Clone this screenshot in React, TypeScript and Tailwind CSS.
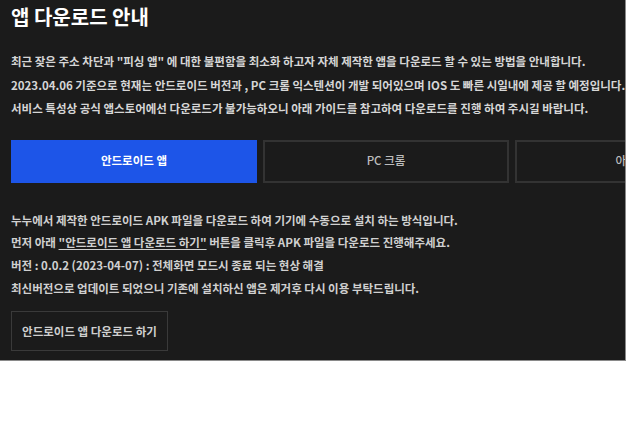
import React from 'react';

const FONT = { fontFamily: '"Noto Sans CJK KR", "Noto Sans", sans-serif' };

const tabs = ['안드로이드 앱', 'PC 크롬', '아이폰 앱'];

const App: React.FC = () => {
  return (
    <div className="w-[640px] h-[427px] bg-white" style={FONT}>
      <div className="w-[626px] h-[361px] bg-[#1b1b1b] border-r border-b border-[#8a8a8a] overflow-hidden pl-[11px]">
        <h1 className="h-[34px] pt-[2px] text-[20px] leading-[30px] font-semibold text-white">앱 다운로드 안내</h1>

        <div className="mt-[16px] text-[11.5px] leading-[23.5px] font-semibold text-[#d6d6d6] whitespace-nowrap">
          <p>최근 잦은 주소 차단과 "피싱 앱" 에 대한 불편함을 최소화 하고자 자체 제작한 앱을 다운로드 할 수 있는 방법을 안내합니다.</p>
          <p>2023.04.06 기준으로 현재는 안드로이드 버전과 , PC 크롬 익스텐션이 개발 되어있으며 IOS 도 빠른 시일내에 제공 할 예정입니다.</p>
          <p>서비스 특성상 공식 앱스토어에선 다운로드가 불가능하오니 아래 가이드를 참고하여 다운로드를 진행 하여 주시길 바랍니다.</p>
        </div>

        <div className="mt-[19px] flex gap-[6px]">
          {tabs.map((t, i) => (
            <div
              key={t}
              className={`shrink-0 w-[246px] h-[43px] flex items-center justify-center text-[11.5px] ${
                i === 0
                  ? 'bg-[#1d55e8] text-white font-semibold'
                  : 'border-2 border-[#333] text-[#bdbdbd] font-medium'
              }`}
            >
              {t}
            </div>
          ))}
        </div>

        <div className="mt-[26px] text-[11.5px] leading-[22.7px] font-semibold text-[#d0d0d0] whitespace-nowrap">
          <p>누누에서 제작한 안드로이드 APK 파일을 다운로드 하여 기기에 수동으로 설치 하는 방식입니다.</p>
          <p>
            먼저 아래 <span className="underline underline-offset-2">"안드로이드 앱 다운로드 하기"</span> 버튼을 클릭후 APK 파일을 다운로드 진행해주세요.
          </p>
          <p>버전 : 0.0.2 (2023-04-07) : 전체화면 모드시 종료 되는 현상 해결</p>
          <p>최신버전으로 업데이트 되었으니 기존에 설치하신 앱은 제거후 다시 이용 부탁드립니다.</p>
        </div>

        <button className="mt-[12px] h-[40px] w-[157px] border border-[#3a3a3a] text-[11.5px] font-semibold text-[#cfcfcf] flex items-center justify-center">
          안드로이드 앱 다운로드 하기
        </button>
      </div>
    </div>
  );
};

export default App;
